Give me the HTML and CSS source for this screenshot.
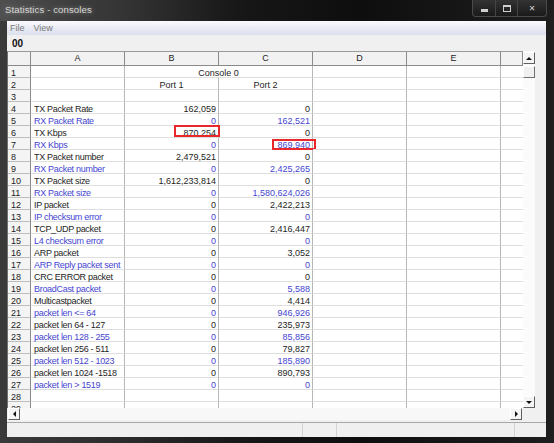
FILE: index.html
```html
<!DOCTYPE html>
<html>
<head>
<meta charset="utf-8">
<link rel="stylesheet" href="styles.css">
</head>
<body>
<div class="window">
  <div class="titlebar">
    <span class="title">Statistics - consoles</span>
    <div class="winbtns">
      <div class="wb wb-min"><span class="g-min"></span></div>
      <div class="wb wb-max"><span class="g-max"></span></div>
      <div class="wb wb-close"><span class="g-close">✕</span></div>
    </div>
  </div>
  <div class="client">
    <div class="menubar"><span class="mi">File</span><span class="mi">View</span></div>
    <div class="toolbar"><span class="tag">00</span></div>
    <div class="sheetwrap">
      <div class="sheet">
        <div class="row hdr"><div class="c rn"></div><div class="c">A</div><div class="c">B</div><div class="c">C</div><div class="c">D</div><div class="c">E</div><div class="c f"></div></div>
        <div class="row"><div class="c rn">1</div><div class="c"></div><div class="c span2 ctr">Console 0</div><div class="c"></div><div class="c"></div><div class="c f"></div></div>
        <div class="row"><div class="c rn">2</div><div class="c"></div><div class="c ctr">Port 1</div><div class="c ctr">Port 2</div><div class="c"></div><div class="c"></div><div class="c f"></div></div>
        <div class="row"><div class="c rn">3</div><div class="c"></div><div class="c"></div><div class="c"></div><div class="c"></div><div class="c"></div><div class="c f"></div></div>
        <div class="row"><div class="c rn">4</div><div class="c lbl">TX Packet Rate</div><div class="c num">162,059</div><div class="c num">0</div><div class="c"></div><div class="c"></div><div class="c f"></div></div>
        <div class="row blue"><div class="c rn">5</div><div class="c lbl">RX Packet Rate</div><div class="c num">0</div><div class="c num">162,521</div><div class="c"></div><div class="c"></div><div class="c f"></div></div>
        <div class="row"><div class="c rn">6</div><div class="c lbl">TX Kbps</div><div class="c num mark1">870,254</div><div class="c num">0</div><div class="c"></div><div class="c"></div><div class="c f"></div></div>
        <div class="row blue"><div class="c rn">7</div><div class="c lbl">RX Kbps</div><div class="c num">0</div><div class="c num mark2">869,940</div><div class="c"></div><div class="c"></div><div class="c f"></div></div>
        <div class="row"><div class="c rn">8</div><div class="c lbl">TX Packet number</div><div class="c num">2,479,521</div><div class="c num">0</div><div class="c"></div><div class="c"></div><div class="c f"></div></div>
        <div class="row blue"><div class="c rn">9</div><div class="c lbl">RX Packet number</div><div class="c num">0</div><div class="c num">2,425,265</div><div class="c"></div><div class="c"></div><div class="c f"></div></div>
        <div class="row"><div class="c rn">10</div><div class="c lbl">TX Packet size</div><div class="c num">1,612,233,814</div><div class="c num">0</div><div class="c"></div><div class="c"></div><div class="c f"></div></div>
        <div class="row blue"><div class="c rn">11</div><div class="c lbl">RX Packet size</div><div class="c num">0</div><div class="c num">1,580,624,026</div><div class="c"></div><div class="c"></div><div class="c f"></div></div>
        <div class="row"><div class="c rn">12</div><div class="c lbl">IP packet</div><div class="c num">0</div><div class="c num">2,422,213</div><div class="c"></div><div class="c"></div><div class="c f"></div></div>
        <div class="row blue"><div class="c rn">13</div><div class="c lbl">IP checksum error</div><div class="c num">0</div><div class="c num">0</div><div class="c"></div><div class="c"></div><div class="c f"></div></div>
        <div class="row"><div class="c rn">14</div><div class="c lbl">TCP_UDP packet</div><div class="c num">0</div><div class="c num">2,416,447</div><div class="c"></div><div class="c"></div><div class="c f"></div></div>
        <div class="row blue"><div class="c rn">15</div><div class="c lbl">L4 checksum error</div><div class="c num">0</div><div class="c num">0</div><div class="c"></div><div class="c"></div><div class="c f"></div></div>
        <div class="row"><div class="c rn">16</div><div class="c lbl">ARP packet</div><div class="c num">0</div><div class="c num">3,052</div><div class="c"></div><div class="c"></div><div class="c f"></div></div>
        <div class="row blue"><div class="c rn">17</div><div class="c lbl">ARP Reply packet sent</div><div class="c num">0</div><div class="c num">0</div><div class="c"></div><div class="c"></div><div class="c f"></div></div>
        <div class="row"><div class="c rn">18</div><div class="c lbl">CRC ERROR packet</div><div class="c num">0</div><div class="c num">0</div><div class="c"></div><div class="c"></div><div class="c f"></div></div>
        <div class="row blue"><div class="c rn">19</div><div class="c lbl">BroadCast packet</div><div class="c num">0</div><div class="c num">5,588</div><div class="c"></div><div class="c"></div><div class="c f"></div></div>
        <div class="row"><div class="c rn">20</div><div class="c lbl">Multicastpacket</div><div class="c num">0</div><div class="c num">4,414</div><div class="c"></div><div class="c"></div><div class="c f"></div></div>
        <div class="row blue"><div class="c rn">21</div><div class="c lbl">packet len &lt;= 64</div><div class="c num">0</div><div class="c num">946,926</div><div class="c"></div><div class="c"></div><div class="c f"></div></div>
        <div class="row"><div class="c rn">22</div><div class="c lbl">packet len 64 - 127</div><div class="c num">0</div><div class="c num">235,973</div><div class="c"></div><div class="c"></div><div class="c f"></div></div>
        <div class="row blue"><div class="c rn">23</div><div class="c lbl">packet len 128 - 255</div><div class="c num">0</div><div class="c num">85,856</div><div class="c"></div><div class="c"></div><div class="c f"></div></div>
        <div class="row"><div class="c rn">24</div><div class="c lbl">packet len 256 - 511</div><div class="c num">0</div><div class="c num">79,827</div><div class="c"></div><div class="c"></div><div class="c f"></div></div>
        <div class="row blue"><div class="c rn">25</div><div class="c lbl">packet len 512 - 1023</div><div class="c num">0</div><div class="c num">185,890</div><div class="c"></div><div class="c"></div><div class="c f"></div></div>
        <div class="row"><div class="c rn">26</div><div class="c lbl">packet len 1024 -1518</div><div class="c num">0</div><div class="c num">890,793</div><div class="c"></div><div class="c"></div><div class="c f"></div></div>
        <div class="row blue"><div class="c rn">27</div><div class="c lbl">packet len &gt; 1519</div><div class="c num">0</div><div class="c num">0</div><div class="c"></div><div class="c"></div><div class="c f"></div></div>
        <div class="row"><div class="c rn">28</div><div class="c"></div><div class="c"></div><div class="c"></div><div class="c"></div><div class="c"></div><div class="c f"></div></div>
        <div class="row"><div class="c rn">29</div><div class="c"></div><div class="c"></div><div class="c"></div><div class="c"></div><div class="c"></div><div class="c f"></div></div>
      </div>
      <div class="vscroll">
        <div class="sbtn"><span class="tri up"></span></div>
        <div class="thumb"></div>
        <div class="vtrack"></div>
        <div class="sbtn"><span class="tri down"></span></div>
      </div>
    </div>
    <div class="hscroll">
      <div class="sbtn"><span class="tri left"></span></div>
      <div class="htrack"></div>
      <div class="sbtn"><span class="tri right"></span></div>
    </div>
    <div class="statusbar">
      <div class="panel p1"></div>
      <div class="panel p2"></div>
      <div class="panel p3"></div>
      <div class="panel p4"></div>
    </div>
  </div>
</div>
</body>
</html>
```
FILE: styles.css
```css
html, body {
  margin: 0;
  padding: 0;
}
body {
  width: 554px;
  height: 443px;
  overflow: hidden;
  background: #262626;
  font-family: "Liberation Sans", Arial, sans-serif;
}
.window {
  display: flex;
  flex-direction: column;
  width: 554px;
  height: 443px;
  background: linear-gradient(90deg, #3a3a3a 0%, #2e2e2e 20%, #161616 45%, #0e0e0e 65%, #1e1e1e 100%);
}
.titlebar {
  height: 21px;
  display: flex;
  align-items: flex-start;
  position: relative;
  background: linear-gradient(90deg, rgba(120,120,120,0.35) 0%, rgba(90,90,90,0.25) 14%, rgba(0,0,0,0) 40%);
}
.title {
  margin: 4px 0 0 5px;
  font-size: 9.6px;
  color: #d6d6d6;
  text-shadow: 0 0 5px rgba(255,255,255,0.45);
  letter-spacing: 0.1px;
}
.winbtns {
  position: absolute;
  right: 7px;
  top: 0;
  display: flex;
  height: 16px;
  border: 1px solid #4a4a4a;
  border-top: none;
  border-radius: 0 0 4px 4px;
  background: linear-gradient(#333, #1a1a1a);
  overflow: hidden;
}
.wb {
  display: flex;
  align-items: center;
  justify-content: center;
  height: 16px;
  position: relative;
}
.wb-min { width: 22px; border-right: 1px solid #454545; }
.wb-max { width: 21px; border-right: 1px solid #454545; }
.wb-close { width: 28px; }
.g-min {
  width: 7px;
  height: 3px;
  background: #cfcfcf;
  margin-top: 5px;
}
.g-max {
  width: 6px;
  height: 4px;
  border: 1px solid #cfcfcf;
  border-top-width: 2px;
}
.g-close {
  color: #cfcfcf;
  font-size: 8px;
  font-weight: bold;
  font-family: "DejaVu Sans", sans-serif;
}
.client {
  margin: 0 8px 6px 7px;
  height: 416px;
  display: flex;
  flex-direction: column;
  background: #f0f0f0;
}
.menubar {
  height: 14px;
  display: flex;
  align-items: center;
  gap: 9px;
  padding-left: 3px;
  background: linear-gradient(#fbfbfd, #e6e8f2 60%, #dde1ee);
  font-size: 9px;
  color: #7a7a7a;
}
.toolbar {
  height: 16px;
  display: flex;
  align-items: center;
  padding-left: 5px;
}
.tag {
  font-size: 10px;
  font-weight: bold;
  color: #111;
  margin-top: 1px;
}
.sheetwrap {
  height: 357px;
  display: flex;
  overflow: hidden;
}
.sheet {
  width: 515px;
  height: 356px;
  border-left: 1px solid #707070;
  border-top: 1px solid #9a9a9a;
  overflow: hidden;
  background: #fff;
  font-size: 9px;
}
.row {
  display: grid;
  grid-template-columns: 23px 94px 94px 94px 94px 94px 22px;
  height: 12px;
  color: #1e1e1e;
}
.row.blue .lbl, .row.blue .num { color: #4545d2; }
.c {
  box-sizing: border-box;
  height: 12px;
  padding-top: 2px;
  line-height: 10px;
  border-right: 1px solid #b8b8b8;
  border-bottom: 1px solid #dedede;
  white-space: nowrap;
  overflow: visible;
  position: relative;
}
.c.rn {
  padding-left: 3px;
  background: #f4f4f4;
  border-right: 1px solid #8a8a8a;
  border-bottom: 1px solid #bdbdbd;
  color: #222;
}
.c.f { border-right: none; }
.hdr { height: 14px; }
.hdr .c {
  height: 14px;
  padding-top: 0;
  line-height: 13px;
  text-align: center;
  background: #f2f2f2;
  border-right: 1px solid #8a8a8a;
  border-bottom: 1px solid #8a8a8a;
  color: #222;
}
.lbl { padding-left: 3px; letter-spacing: -0.3px; }
.num { text-align: right; padding-right: 2px; }
.ctr { text-align: center; }
.span2 { grid-column: span 2; }
.mark1::after, .mark2::after {
  content: "";
  position: absolute;
  border: 2px solid #e8282b;
  box-sizing: border-box;
}
.mark1::after { left: 49px; right: -2px; top: -1px; bottom: 0; }
.mark2::after { left: 53px; right: -4px; top: 1px; bottom: -1px; }
.vscroll {
  width: 12px;
  display: flex;
  flex-direction: column;
  background: #fbfbfb;
}
.sbtn {
  width: 12px;
  height: 12px;
  box-sizing: border-box;
  background: #f4f4f4;
  border: 1px solid #fff;
  border-right-color: #606060;
  border-bottom-color: #606060;
  display: flex;
  align-items: center;
  justify-content: center;
  flex: none;
}
.vscroll .sbtn:first-child { margin-top: 1px; }
.thumb {
  width: 12px;
  height: 12px;
  box-sizing: border-box;
  margin-top: 2px;
  background: #f0f0f0;
  border: 1px solid #fff;
  border-right-color: #707070;
  border-bottom-color: #707070;
}
.vtrack { flex: 1; }
.tri { width: 0; height: 0; display: block; }
.tri.up { border-left: 3px solid transparent; border-right: 3px solid transparent; border-bottom: 3px solid #111; }
.tri.down { border-left: 3px solid transparent; border-right: 3px solid transparent; border-top: 3px solid #111; }
.tri.left { border-top: 3px solid transparent; border-bottom: 3px solid transparent; border-right: 3px solid #111; }
.tri.right { border-top: 3px solid transparent; border-bottom: 3px solid transparent; border-left: 3px solid #111; }
.hscroll {
  height: 12px;
  width: 514px;
  margin-left: 1px;
  display: flex;
  background: #f8f8f8;
}
.htrack { flex: 1; }
.statusbar {
  margin-top: 2px;
  height: 15px;
  box-sizing: border-box;
  border-top: 1px solid #a8a8a8;
  display: flex;
  background: #f0f0f0;
}
.panel { height: 100%; border-right: 1px solid #d4d4d4; }
.p1 { width: 295px; }
.p2 { width: 33px; }
.p3 { width: 177px; }
.p4 { flex: 1; border-right: none; }
```
